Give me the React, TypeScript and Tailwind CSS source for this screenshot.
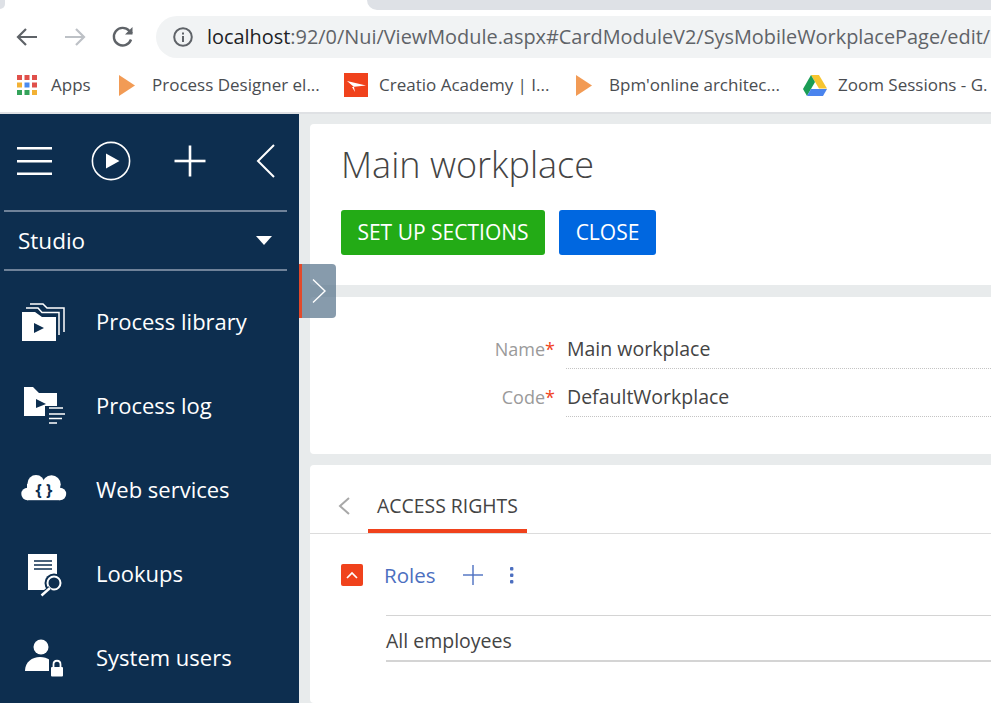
import React from "react";

const NAVY = "#0d2e4f";

function Bookmark({ icon, label, className }: { icon: React.ReactNode; label: string; className: string }) {
  return (
    <div className={`flex shrink-0 items-center ${className}`}>
      {icon}
      <span className="whitespace-nowrap text-[17px] text-[#4a4d51]">{label}</span>
    </div>
  );
}

const PlayMark = () => (
  <svg width="16" height="21" viewBox="0 0 16 21" className="mr-[17px] shrink-0">
    <path d="M0 0 L16 10.5 L0 21Z" fill="#f29b55" />
  </svg>
);

const AppsIcon = () => (
  <svg width="20" height="20" viewBox="0 0 20 20" className="mr-[14px] shrink-0">
    {[
      [0, 0, "#e0504a"], [7.5, 0, "#e0504a"], [15, 0, "#e0504a"],
      [0, 7.5, "#f2b134"], [7.5, 7.5, "#4a8bf0"], [15, 7.5, "#e0504a"],
      [0, 15, "#34a35a"], [7.5, 15, "#34a35a"], [15, 15, "#f2b134"],
    ].map(([x, y, c], i) => (
      <rect key={i} x={x as number} y={y as number} width="5" height="5" fill={c as string} />
    ))}
  </svg>
);

const CreatioIcon = () => (
  <svg width="24" height="24" viewBox="0 0 24 24" className="mr-[11px] shrink-0">
    <rect width="24" height="24" fill="#f0421c" />
    <path d="M3 8 L22 12.5 L8 14 L11 19 L10 14 Z" fill="#fff" />
  </svg>
);

const DriveIcon = () => (
  <svg width="24" height="21" viewBox="0 0 24 21" className="mr-[11px] shrink-0">
    <path d="M8 0 H16 L24 13.5 H16Z" fill="#f7c52f" />
    <path d="M8 0 L12 7 L4 21 L0 14Z" fill="#1a9d55" />
    <path d="M8 14 H24 L20 21 H4Z" fill="#4a84ee" />
  </svg>
);

function BrowserChrome() {
  return (
    <div className="h-[114px] shrink-0 bg-white border-b-2 border-[#dfe1e4]">
      <div className="flex h-[10px] justify-between">
        <div className="h-[9px] w-[5px] rounded-br-[5px] bg-[#dee1e6]" />
        <div className="h-[10px] w-[624px] rounded-bl-[10px] bg-[#dee1e6]" />
      </div>
      <div className="mt-[6px] flex h-[42px] items-center">
        <div className="flex w-[156px] shrink-0 items-center pl-[16px]">
          <svg width="22" height="22" viewBox="0 0 22 22" fill="none" stroke="#5f6368" strokeWidth="2.2">
            <path d="M21 11H2M10 3L2 11L10 19" />
          </svg>
          <svg width="22" height="22" viewBox="0 0 22 22" fill="none" stroke="#bdc1c6" strokeWidth="2.2" className="ml-[26px]">
            <path d="M1 11H20M12 3L20 11L12 19" />
          </svg>
          <svg width="24" height="24" viewBox="0 0 24 24" fill="none" stroke="#5f6368" strokeWidth="2.4" className="ml-[25px]">
            <path d="M20 14.5A8.8 8.8 0 1 1 18.2 5.8L21 8.5" />
            <path d="M21.5 2V9.5H14" fill="#5f6368" stroke="none" />
          </svg>
        </div>
        <div className="flex h-[42px] flex-1 items-center overflow-hidden rounded-l-[21px] bg-[#f1f3f4] pl-[17px]">
          <svg width="20" height="20" viewBox="0 0 20 20" fill="none" className="mr-[14px] shrink-0">
            <circle cx="10" cy="10" r="8.8" stroke="#5f6368" strokeWidth="2" />
            <rect x="9" y="9" width="2" height="6" fill="#5f6368" />
            <rect x="9" y="5.5" width="2" height="2" fill="#5f6368" />
          </svg>
          <span className="whitespace-nowrap text-[19.9px] text-[#5f6368]">
            <span className="text-[#202124]">localhost</span>:92/0/Nui/ViewModule.aspx#CardModuleV2/SysMobileWorkplacePage/edit/
          </span>
        </div>
      </div>
      <div className="mt-[12px] flex h-[30px] items-center overflow-hidden whitespace-nowrap pl-[17px]">
        <Bookmark icon={<AppsIcon />} label="Apps" className="w-[102px]" />
        <Bookmark icon={<PlayMark />} label="Process Designer el..." className="w-[225px]" />
        <Bookmark icon={<CreatioIcon />} label="Creatio Academy | I..." className="w-[232px]" />
        <Bookmark icon={<PlayMark />} label="Bpm'online architec..." className="w-[227px]" />
        <Bookmark icon={<DriveIcon />} label="Zoom Sessions - G." className="w-[188px]" />
      </div>
    </div>
  );
}

const menu: { label: string; icon: React.ReactNode }[] = [
  {
    label: "Process library",
    icon: (
      <svg width="50" height="48" viewBox="0 0 50 48" fill="none">
        <path d="M2 14H15L22 19H36V43H2Z" fill="#fff" />
        <path d="M14 25L24 30L14 35Z" fill={NAVY} />
        <path d="M10 6H23L27 10H44V34" stroke="#fff" strokeWidth="1.5" />
        <path d="M6 10H18L22 14.5H39V37" stroke="#fff" strokeWidth="1.5" />
      </svg>
    ),
  },
  {
    label: "Process log",
    icon: (
      <svg width="50" height="48" viewBox="0 0 50 48" fill="none">
        <path d="M4 5H13L19 11H37V34H4Z" fill="#fff" />
        <path d="M16 17L26 22L16 26Z" fill={NAVY} />
        <rect x="25" y="24" width="16" height="12" fill={NAVY} />
        <path d="M29 26H43M29 32H45M29 36.5H42M29 41H37" stroke="#fff" strokeWidth="1.5" />
      </svg>
    ),
  },
  {
    label: "Web services",
    icon: (
      <svg width="50" height="48" viewBox="-1 0 50 48" fill="#fff">
        <circle cx="6.5" cy="28" r="6.2" />
        <circle cx="15" cy="17.5" r="8.5" />
        <circle cx="30.5" cy="18.5" r="9.2" />
        <circle cx="39" cy="28" r="6.2" />
        <rect x="6" y="18" width="33" height="16.2" />
        <text x="23" y="30" textAnchor="middle" fontFamily="'Open Sans', sans-serif" fontWeight="700" fontSize="16" fill={NAVY}>
          {"{ }"}
        </text>
      </svg>
    ),
  },
  {
    label: "Lookups",
    icon: (
      <svg width="50" height="48" viewBox="0 0 50 48" fill="none">
        <path d="M8 4H37V40H8Z" fill="#fff" />
        <path d="M14 11H32M14 15H32M14 19H32" stroke={NAVY} strokeWidth="1.4" />
        <circle cx="34" cy="33" r="9.5" fill={NAVY} />
        <circle cx="34" cy="33" r="6.5" stroke="#fff" strokeWidth="2" />
        <path d="M30 38L21 46" stroke={NAVY} strokeWidth="5" />
        <path d="M30 38L21.5 45.5" stroke="#fff" strokeWidth="2.4" />
      </svg>
    ),
  },
  {
    label: "System users",
    icon: (
      <svg width="50" height="48" viewBox="0 0 50 48" fill="none">
        <circle cx="21" cy="13" r="7.5" fill="#fff" />
        <path d="M5 37C5 28 12 23 20 23C24 23 27 24 30 26V37Z" fill="#fff" />
        <rect x="29" y="24" width="16" height="20" fill={NAVY} />
        <rect x="31" y="33" width="12" height="9.5" rx="1" fill="#fff" />
        <path d="M33.5 33V30.5C33.5 25.5 40.5 25.5 40.5 30.5V33" stroke="#fff" strokeWidth="1.8" />
      </svg>
    ),
  },
];

function Sidebar() {
  return (
    <aside className="w-[299px] shrink-0 overflow-hidden bg-[#0d2e4f] text-white">
      <div className="flex h-[96px] items-center pl-[17px] pb-[2px]">
        <svg width="36" height="30" viewBox="0 0 36 30" fill="#fff">
          <rect y="1" width="35" height="2.5" />
          <rect y="14" width="35" height="2.5" />
          <rect y="26.5" width="35" height="2.5" />
        </svg>
        <svg width="40" height="40" viewBox="0 0 40 40" fill="none" className="ml-[38px]">
          <circle cx="20" cy="20" r="18.6" stroke="#fff" strokeWidth="1.6" />
          <path d="M15 12.5L28.5 20L15 27.5Z" fill="#fff" />
        </svg>
        <svg width="32" height="32" viewBox="0 0 32 32" fill="#fff" className="ml-[43px]">
          <rect x="0.5" y="14.7" width="31" height="2.6" />
          <rect x="14.7" y="0.5" width="2.6" height="31" />
        </svg>
        <svg width="20" height="34" viewBox="0 0 20 34" fill="none" stroke="#fff" strokeWidth="2" className="ml-[50px]">
          <path d="M18 1L2 17L18 33" />
        </svg>
      </div>
      <div className="ml-[4px] mr-[12px] flex h-[61px] items-center justify-between border-y-2 border-[#6f8299] pl-[14px] pr-[15px]">
        <span className="pt-[2px] text-[22.5px] leading-none">Studio</span>
        <span className="h-0 w-0 border-x-[8px] border-t-[9px] border-x-transparent border-t-white" />
      </div>
      <nav className="pt-[9px]">
        {menu.map((item) => (
          <div key={item.label} className="flex h-[84px] items-center pl-[20px]">
            <span className="mr-[26px] flex h-[48px] w-[50px] shrink-0">{item.icon}</span>
            <span className="pb-[2px] text-[22px] leading-none">{item.label}</span>
          </div>
        ))}
      </nav>
    </aside>
  );
}

function Field({ label, value }: { label: string; value: string }) {
  return (
    <div className="flex h-[48px] items-center">
      <div className="w-[256px] pr-[11px] text-right text-[18px] text-[#9a9a9a]">
        {label}
        <span className="text-[#f0421c]">*</span>
      </div>
      <div className="flex h-[40px] flex-1 items-center border-b border-dotted border-[#c4c4c4] pl-[1px] text-[19.5px] text-[#444]">
        {value}
      </div>
    </div>
  );
}

function Main() {
  return (
    <main className="relative flex min-w-0 flex-1 flex-col gap-[11px] overflow-hidden bg-[#e8ebec] pl-[11px] pt-[10px]">
      <section className="mb-[1px] h-[161px] shrink-0 rounded-l-[4px] bg-white pl-[31px] pt-[16px]">
        <h1 className="text-[36px] font-light leading-[50px] text-[#444]">Main workplace</h1>
        <div className="mt-[20px] flex gap-[14px]">
          <button className="h-[45px] w-[204px] rounded-[3px] bg-[#23ab16] text-[21px] text-white">SET UP SECTIONS</button>
          <button className="h-[45px] w-[97px] rounded-[3px] bg-[#0067e0] text-[21px] text-white">CLOSE</button>
        </div>
      </section>
      <section className="h-[157px] shrink-0 rounded-l-[4px] bg-white pt-[28px]">
        <Field label="Name" value="Main workplace" />
        <Field label="Code" value="DefaultWorkplace" />
      </section>
      <section className="flex-1 rounded-l-[4px] bg-white">
        <div className="flex h-[69px] items-end border-b border-[#dcdcdc]">
          <svg width="14" height="20" viewBox="0 0 14 20" fill="none" stroke="#a8a8a8" strokeWidth="2" className="mb-[17px] ml-[27px]">
            <path d="M12 2L3 10L12 18" />
          </svg>
          <div className="ml-[17px] flex h-[44px] w-[159px] items-start justify-center border-b-[4px] border-[#f0421c] pt-[4px] text-[19.4px] leading-[26px] text-[#444]">
            ACCESS RIGHTS
          </div>
        </div>
        <div className="flex h-[81px] items-start pl-[31px] pt-[30px]">
          <span className="flex h-[22px] w-[22px] items-center justify-center rounded-[2px] bg-[#f0421c]">
            <svg width="14" height="9" viewBox="0 0 14 9" fill="none" stroke="#fff" strokeWidth="1.7">
              <path d="M2 7L7 2L12 7" />
            </svg>
          </span>
          <span className="ml-[21px] text-[20.5px] leading-[22px] text-[#4c6fc0]">Roles</span>
          <svg width="20" height="20" viewBox="0 0 20 20" fill="#4c6fc0" className="ml-[28px] mt-[1px]">
            <rect y="9.3" width="20" height="1.4" />
            <rect x="9.3" width="1.4" height="20" />
          </svg>
          <svg width="6" height="20" viewBox="0 0 6 20" fill="#4c6fc0" className="ml-[26px] mt-[1px]">
            <rect x="1" y="2" width="3.4" height="3.4" rx="1" />
            <rect x="1" y="8.5" width="3.4" height="3.4" rx="1" />
            <rect x="1" y="15" width="3.4" height="3.4" rx="1" />
          </svg>
        </div>
        <div className="ml-[76px] flex h-[47px] items-center border-t border-b-2 border-[#d4d4d4] pt-[5px] text-[19.5px] text-[#444]">
          All employees
        </div>
      </section>
      <div className="absolute left-0 top-[150px] flex h-[54px] w-[37px] items-center justify-center rounded-r-[4px] border-l-[3px] border-[#e2492a] bg-[#5f7a90]/75">
        <svg width="16" height="26" viewBox="0 0 16 26" fill="none" stroke="#fff" strokeWidth="1.4">
          <path d="M2 1.5L14 13L2 24.5" />
        </svg>
      </div>
    </main>
  );
}

export default function App() {
  return (
    <div className="flex h-[703px] w-[991px] flex-col overflow-hidden bg-white font-['Open_Sans',sans-serif]">
      <BrowserChrome />
      <div className="flex min-h-0 flex-1">
        <Sidebar />
        <Main />
      </div>
    </div>
  );
}
